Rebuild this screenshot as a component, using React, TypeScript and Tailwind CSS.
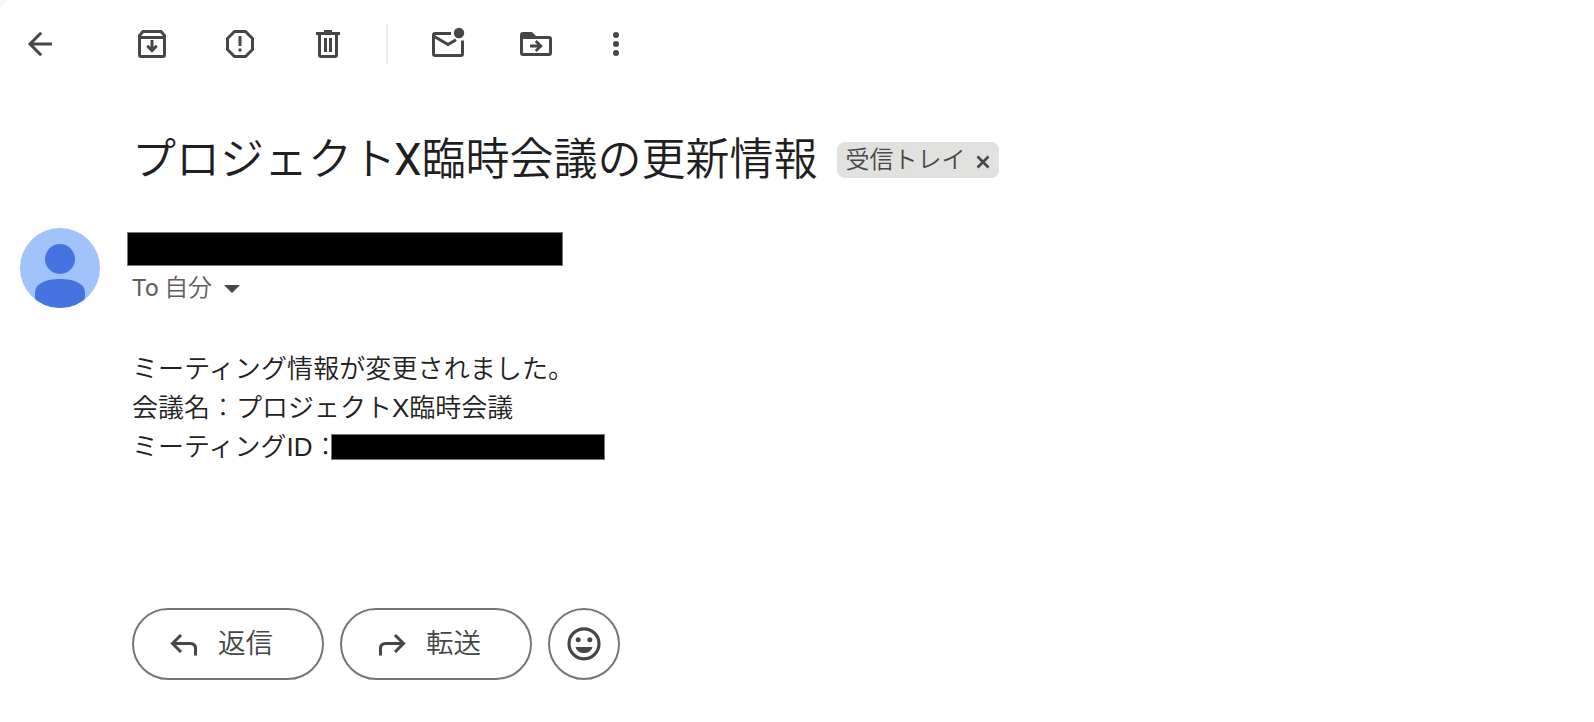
import type { ReactNode } from "react";

function ToolButton({ label, className = "", children }: { label: string; className?: string; children: ReactNode }) {
  return (
    <button aria-label={label} className={`size-10 shrink-0 text-[#444746] ${className}`}>
      <svg viewBox="0 0 40 40" className="size-10" fill="none" stroke="currentColor" strokeWidth={3}>
        {children}
      </svg>
    </button>
  );
}

function Toolbar() {
  return (
    <header className="flex h-[88px] items-center pl-5">
      <ToolButton label="戻る" className="mr-[72px]">
        <path d="M32 20H10M21.2 8.8 10 20l11.2 11.2" />
      </ToolButton>
      <ToolButton label="アーカイブ" className="mr-12">
        <path d="M7.5 13v18q0 1.5 1.5 1.5h22q1.5 0 1.5-1.5V13M7.5 13.5h25M7.5 14v-2.5L11 7.5h18l3.5 4V14" />
        <path d="M20 16v10M15.2 21.8 20 26.6l4.8-4.8" />
      </ToolButton>
      <ToolButton label="迷惑メール" className="mr-12">
        <path d="M14.5 7.5h11l7 7v11l-7 7h-11l-7-7v-11z" />
        <path d="M20 12v10" />
        <circle cx="20" cy="26" r="1.7" fill="currentColor" stroke="none" />
      </ToolButton>
      <ToolButton label="削除" className="mr-[38px]">
        <path d="M8 9.5h24M16 7.5h8" />
        <path d="M11.5 10v21q0 1.5 1.5 1.5h14q1.5 0 1.5-1.5V10" />
        <path d="M17.5 14v14M22.5 14v14" />
      </ToolButton>
      <div className="mr-10 h-10 w-0.5 bg-[#ebecef]" />
      <ToolButton label="未読にする" className="mr-12">
        <path d="M23 9.5H7q-1.5 0-1.5 1.5v19q0 1.5 1.5 1.5h26q1.5 0 1.5-1.5V16.5" />
        <path d="M5.5 12 20 20.5l8-4.7" />
        <circle cx="31" cy="9" r="5.2" fill="currentColor" stroke="none" />
      </ToolButton>
      <ToolButton label="移動" className="mr-10">
        <path d="M4 11q0-3 3-3h9l4 4h13q3 0 3 3v14q0 3-3 3H7q-3 0-3-3zm3 4v14h26V15z" fill="currentColor" fillRule="evenodd" stroke="none" />
        <path d="M14 22h10M19.8 17l5 5-5 5" strokeWidth={2.8} />
      </ToolButton>
      <ToolButton label="その他">
        <g fill="currentColor" stroke="none">
          <circle cx="20" cy="11" r="3" />
          <circle cx="20" cy="20" r="3" />
          <circle cx="20" cy="29" r="3" />
        </g>
      </ToolButton>
    </header>
  );
}

function Avatar() {
  return (
    <svg viewBox="0 0 80 80" className="mr-[27px] size-20 shrink-0">
      <clipPath id="avatar">
        <circle cx="40" cy="40" r="40" />
      </clipPath>
      <g clipPath="url(#avatar)">
        <path d="M0 0h80v80H0z" fill="#a1c2fa" />
        <circle cx="40" cy="31" r="15" fill="#4573df" />
        <path d="M15 80V65C15 55 27 51 40 51s25 4 25 14v15z" fill="#4573df" />
      </g>
    </svg>
  );
}

function Colon() {
  return <span className="font-['Noto_Sans_CJK_JP_Light','Noto_Sans_CJK_JP',sans-serif] leading-none font-light">：</span>;
}

const pill = "flex h-[72px] items-center rounded-full border-2 border-[#747775]";

export default function App() {
  return (
    <div className="bg-[#f6f8fc]">
      <div className="h-[722px] w-full overflow-hidden rounded-tl-xl bg-white font-['Roboto','Noto_Sans_CJK_JP_DemiLight','Noto_Sans_CJK_JP',sans-serif] text-[#1f1f1f]">
        <Toolbar />

        <div className="flex h-[140px] items-center pt-1 pl-[132px]">
          <h1 className="whitespace-nowrap text-[44px] leading-[56px] font-[350]">
            プロジェクト<span className="-ml-0.5 font-normal">X</span>臨時会議の更新情報
          </h1>
          <div className="ml-[19px] flex h-9 w-[162px] items-center rounded-lg bg-[#e1e1df] pl-[9px] text-[#484848]">
            <span className="whitespace-nowrap text-[24px] leading-9">受信トレイ</span>
            <svg viewBox="0 0 14 14" className="mt-1 ml-2.5 size-3.5" stroke="#444746" strokeWidth={2.6}>
              <path d="m1.5 1.5 11 11m0-11-11 11" />
            </svg>
          </div>
        </div>

        <div className="flex h-20 pl-5">
          <Avatar />
          <div className="pt-1">
            <div className="h-[34px] w-[436px] border border-[#777] bg-black" />
            <div className="flex h-11 items-center pl-[5px] text-[24px] text-[#5e5e5e]">
              <span className="tracking-[-0.2px]">To 自分</span>
              <svg viewBox="0 0 16 8" className="mt-px ml-3 h-2 w-4">
                <path d="M0 0h16L8 8z" fill="#444746" />
              </svg>
            </div>
          </div>
        </div>

        <div className="h-[300px] pt-[42px] pl-[132px] font-['Liberation_Sans','Noto_Sans_CJK_JP_DemiLight','Noto_Sans_CJK_JP',sans-serif] text-[26px] leading-[39px] font-[350] text-[#222]">
          <p className="h-[39px] tracking-[0.1px]">ミーティング情報が変更されました。</p>
          <p className="h-[39px]">会議名<Colon />プロジェクトX臨時会議</p>
          <div className="flex h-[39px]">
            <span className="w-[199px] shrink-0 whitespace-nowrap">ミーティングID<Colon /></span>
            <div className="z-10 mt-1.5 h-[26px] w-[274px] border border-[#777] bg-black" />
          </div>
        </div>

        <div className="flex gap-4 pl-[132px] text-[27.5px] text-[#444746]">
          <button className={`${pill} w-48 pl-9`}>
            <svg viewBox="0 0 28 24" className="mr-5 h-6 w-7" fill="none" stroke="currentColor" strokeWidth={3}>
              <path d="M11 3 2.5 11.5 11 20M3 11.5h17.5q5 0 5 5v7" />
            </svg>
            返信
          </button>
          <button className={`${pill} w-48 pl-9`}>
            <svg viewBox="0 0 28 24" className="mr-5 h-6 w-7" fill="none" stroke="currentColor" strokeWidth={3}>
              <path d="m17 3 8.5 8.5L17 20M25 11.5H7.5q-5 0-5 5v7" />
            </svg>
            転送
          </button>
          <button aria-label="リアクション" className={`${pill} w-[72px] justify-center`}>
            <svg viewBox="0 0 36 36" className="size-9">
              <circle cx="18" cy="17.8" r="15" fill="none" stroke="currentColor" strokeWidth={3.2} />
              <circle cx="12.2" cy="13.8" r="2.5" fill="currentColor" />
              <circle cx="23.8" cy="13.8" r="2.5" fill="currentColor" />
              <path d="M9.5 21h17c-1.2 4-4.5 6-8.5 6s-7.3-2-8.5-6z" fill="currentColor" />
            </svg>
          </button>
        </div>
      </div>
    </div>
  );
}
